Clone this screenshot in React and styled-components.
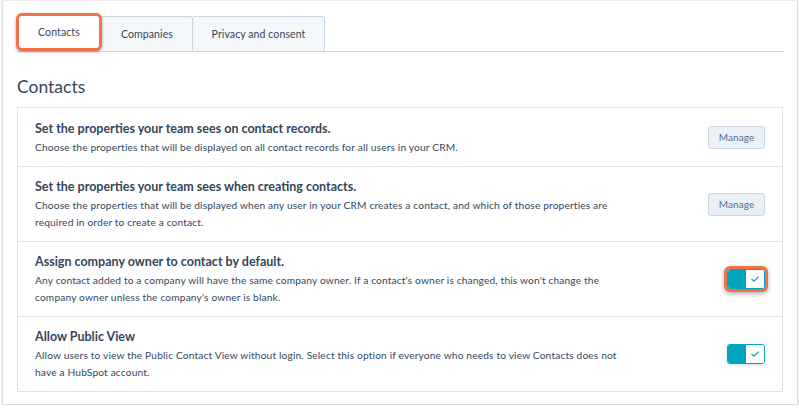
import styled, { createGlobalStyle } from 'styled-components';

const GlobalStyle = createGlobalStyle`
  html, body { margin: 0; padding: 0; background: #fff; }
  body { font-family: Lato, "Open Sans", sans-serif; color: #33475b; }
  * { box-sizing: border-box; }
`;

const settings = [
  {
    title: 'Set the properties your team sees on contact records.',
    text: 'Choose the properties that will be displayed on all contact records for all users in your CRM.',
    control: 'button',
  },
  {
    title: 'Set the properties your team sees when creating contacts.',
    text: 'Choose the properties that will be displayed when any user in your CRM creates a contact, and which of those properties are required in order to create a contact.',
    control: 'button',
  },
  {
    title: 'Assign company owner to contact by default.',
    text: "Any contact added to a company will have the same company owner. If a contact's owner is changed, this won't change the company owner unless the company's owner is blank.",
    control: 'toggle',
    highlight: true,
  },
  {
    title: 'Allow Public View',
    text: 'Allow users to view the Public Contact View without login. Select this option if everyone who needs to view Contacts does not have a HubSpot account.',
    control: 'toggle',
  },
];

const tabs = [
  { label: 'Contacts', width: 86 },
  { label: 'Companies', width: 91 },
  { label: 'Privacy and consent', width: 132 },
];

const App = () => (
  <>
    <GlobalStyle />
    <Frame>
      <TabBar>
        {tabs.map((t, i) => (
          <Tab key={t.label} $active={i === 0} $width={t.width}>{t.label}</Tab>
        ))}
      </TabBar>
      <Heading>Contacts</Heading>
      <Card>
        {settings.map((s) => (
          <Row key={s.title}>
            <TextCol>
              <Title>{s.title}</Title>
              <Desc>{s.text}</Desc>
            </TextCol>
            {s.control === 'button' ? (
              <ManageButton>Manage</ManageButton>
            ) : (
              <Toggle $highlight={s.highlight}>
                <ToggleFill />
                <ToggleKnob>
                  <svg width="10" height="8" viewBox="0 0 10 8" fill="none">
                    <path d="M1.8 4.3 L4 6.2 L8.4 1.8" stroke="#00a4bd" strokeWidth="1.2" strokeLinecap="round" strokeLinejoin="round" />
                  </svg>
                </ToggleKnob>
              </Toggle>
            )}
          </Row>
        ))}
      </Card>
    </Frame>
  </>
);

const Frame = styled.div`
  margin: 0 0 0 2px;
  width: 796px;
  height: 405px;
  border: 1px solid #dcdcdc;
  border-top-color: #ececec;
  box-shadow: 0 1px 2px rgba(0, 0, 0, 0.18);
  padding: 15px 13px 0 14px;
`;

const TabBar = styled.div`
  display: flex;
  align-items: flex-end;
  height: 36px;
  border-bottom: 1px solid #cbd6e2;
`;

const Tab = styled.div`
  width: ${(p) => p.$width}px;
  height: 36px;
  margin-bottom: -1px;
  display: flex;
  align-items: center;
  justify-content: center;
  font-size: 10.5px;
  letter-spacing: 0.1px;
  color: #33475b;
  background: ${(p) => (p.$active ? '#fff' : '#f5f8fa')};
  border: 1px solid #cbd6e2;
  border-left: none;
  border-radius: 0 3px 0 0;
  ${(p) =>
    p.$active &&
    `
    position: relative;
    z-index: 1;
    margin-left: -1px;
    margin-bottom: 0;
    height: 38px;
    border: 3px solid #f1714c;
    border-radius: 6px;
    box-shadow: 0 1px 3px rgba(0, 0, 0, 0.35);
  `}
`;

const Heading = styled.h2`
  margin: 23px 0 8px 0;
  font-size: 17.5px;
  line-height: 24px;
  font-weight: 400;
  color: #33475b;
`;

const Card = styled.div`
  width: 766px;
  border: 1px solid #dfe3eb;
`;

const Row = styled.div`
  display: flex;
  align-items: center;
  justify-content: space-between;
  min-height: 58px;
  padding: 10px 16px 10px 17px;
  & + & { border-top: 1px solid #dfe3eb; }
`;

const TextCol = styled.div`
  max-width: 590px;
`;

const Title = styled.div`
  font-size: 12.5px;
  font-weight: 700;
  line-height: 20px;
  color: #33475b;
`;

const Desc = styled.div`
  font-size: 10.2px;
  letter-spacing: 0.15px;
  line-height: 17px;
  color: #33475b;
`;

const ManageButton = styled.button`
  width: 57px;
  height: 23px;
  margin-right: 1px;
  font-family: Lato, "Open Sans", sans-serif;
  font-size: 10px;
  letter-spacing: 0.1px;
  color: #506e91;
  background: #eaf0f6;
  border: 1px solid #cbd6e2;
  border-radius: 3px;
  padding: 0;
`;

const Toggle = styled.div`
  display: flex;
  width: 38px;
  height: 20px;
  margin-right: 1px;
  border: 1px solid #00a4bd;
  border-radius: 3px;
  overflow: hidden;
  box-shadow: 0 1px 3px rgba(0, 0, 0, 0.15);
  ${(p) =>
    p.$highlight &&
    `
    box-shadow: 0 0 0 2px #f1714c, 0 0 0 3px #f1714c, 0 2px 5px 3px rgba(0, 0, 0, 0.3);
  `}
`;

const ToggleFill = styled.div`
  flex: 1;
  background: #00a4bd;
`;

const ToggleKnob = styled.div`
  flex: 1;
  background: #fff;
  display: flex;
  align-items: center;
  justify-content: center;
`;

export default App;
